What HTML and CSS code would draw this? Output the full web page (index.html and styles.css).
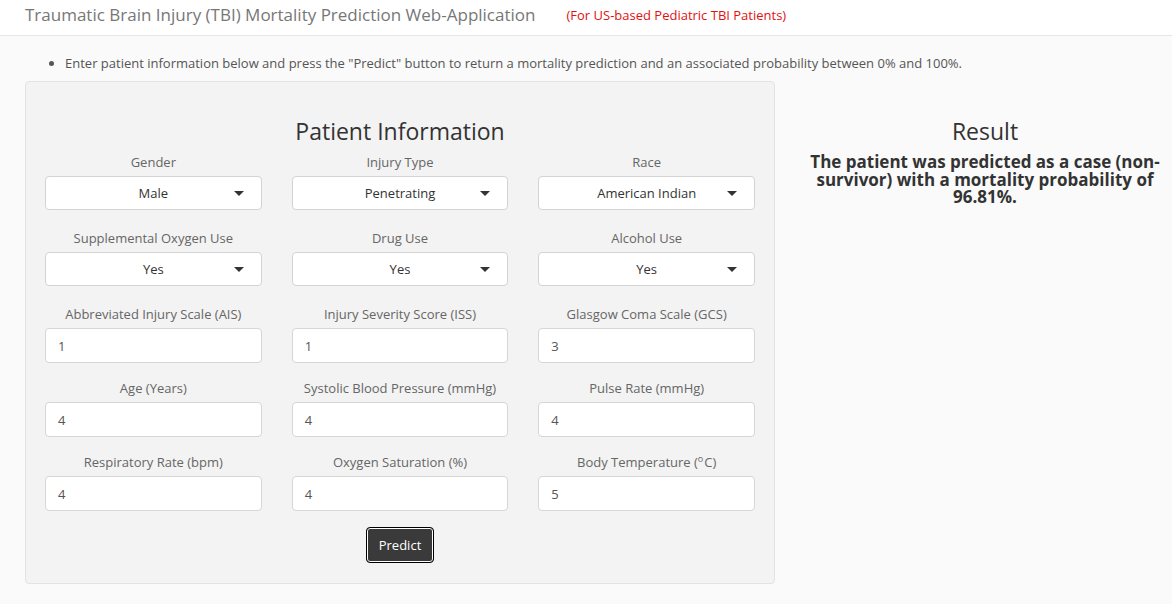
FILE: index.html
```html
<!DOCTYPE html>
<html>
<head>
<meta charset="utf-8">
<link rel="stylesheet" href="styles.css">
</head>
<body>
<header class="topbar">
  <span class="app-title">Traumatic Brain Injury (TBI) Mortality Prediction Web-Application</span>
  <span class="app-sub">(For US-based Pediatric TBI Patients)</span>
</header>
<main class="content">
  <ul class="intro">
    <li>Enter patient information below and press the "Predict" button to return a mortality prediction and an associated probability between 0% and 100%.</li>
  </ul>
  <div class="layout">
    <section class="well">
      <h3 class="panel-title">Patient Information</h3>
      <div class="grid">
        <div class="group sel"><label>Gender</label><div class="select"><span>Male</span><i class="caret"></i></div></div>
        <div class="group sel"><label>Injury Type</label><div class="select"><span>Penetrating</span><i class="caret"></i></div></div>
        <div class="group sel"><label>Race</label><div class="select"><span>American Indian</span><i class="caret"></i></div></div>

        <div class="group sel"><label>Supplemental Oxygen Use</label><div class="select"><span>Yes</span><i class="caret"></i></div></div>
        <div class="group sel"><label>Drug Use</label><div class="select"><span>Yes</span><i class="caret"></i></div></div>
        <div class="group sel"><label>Alcohol Use</label><div class="select"><span>Yes</span><i class="caret"></i></div></div>

        <div class="group"><label>Abbreviated Injury Scale (AIS)</label><div class="input">1</div></div>
        <div class="group"><label>Injury Severity Score (ISS)</label><div class="input">1</div></div>
        <div class="group"><label>Glasgow Coma Scale (GCS)</label><div class="input">3</div></div>

        <div class="group"><label>Age (Years)</label><div class="input">4</div></div>
        <div class="group"><label>Systolic Blood Pressure (mmHg)</label><div class="input">4</div></div>
        <div class="group"><label>Pulse Rate (mmHg)</label><div class="input">4</div></div>

        <div class="group"><label>Respiratory Rate (bpm)</label><div class="input">4</div></div>
        <div class="group"><label>Oxygen Saturation (%)</label><div class="input">4</div></div>
        <div class="group"><label>Body Temperature (<sup>o</sup>C)</label><div class="input">5</div></div>
      </div>
      <div class="actions"><button class="btn">Predict</button></div>
    </section>
    <section class="result">
      <h3 class="panel-title">Result</h3>
      <p class="result-text">The patient was predicted as a case (non-survivor) with a mortality probability of 96.81%.</p>
    </section>
  </div>
</main>
</body>
</html>
```
FILE: styles.css
```css
* { box-sizing: border-box; }
html, body { margin: 0; padding: 0; }
body {
  font-family: "Open Sans", "Liberation Sans", sans-serif;
  font-size: 13px;
  color: #555;
  background: #fafafa;
  overflow: hidden;
}
.topbar {
  height: 36px;
  background: #fff;
  border-bottom: 1px solid #e7e7e7;
  display: flex;
  align-items: center;
  padding-left: 25px;
  padding-bottom: 6px;
}
.app-title {
  font-size: 17px;
  color: #777;
  font-weight: 400;
}
.app-sub {
  color: #e31010;
  font-size: 13px;
  margin-left: 31px;
}
.content { padding: 0; }
.intro {
  margin: 18px 0 0 0;
  padding-left: 65px;
  line-height: 18px;
  color: #555;
}
.layout {
  display: flex;
  margin-top: 9px;
  padding-left: 25px;
}
.well {
  width: 750px;
  background: #f3f3f3;
  border: 1px solid #e3e3e3;
  border-radius: 4px;
  padding: 19px 19px 20px;
}
.panel-title {
  font-size: 23px;
  font-weight: 400;
  color: #333;
  text-align: center;
  margin: 17px 0 0;
  line-height: 26px;
  height: 26px;
}
.grid {
  margin-top: 9px;
  display: grid;
  grid-template-columns: repeat(3, 1fr);
  column-gap: 30px;
}
.group { display: flex; flex-direction: column; margin-bottom: 16px; }
.group label {
  display: block;
  text-align: center;
  color: #666;
  line-height: 18px;
  height: 18px;
  margin-bottom: 5px;
}
.group sup { font-size: 9px; vertical-align: 5px; line-height: 0; margin-right: 1px; }
.group.sel { margin-bottom: 19px; }
.select {
  height: 34px;
  background: #fff;
  border: 1px solid #d3d3d3;
  border-radius: 4px;
  display: flex;
  align-items: center;
  justify-content: center;
  position: relative;
  color: #333;
  font-size: 13px;
}
.caret {
  position: absolute;
  right: 17px;
  top: 14px;
  width: 0; height: 0;
  border-left: 5px solid transparent;
  border-right: 5px solid transparent;
  border-top: 5px solid #333;
}
.input {
  height: 35px;
  background: #fff;
  border: 1px solid #d6d6d6;
  border-radius: 4px;
  padding: 0 12px;
  display: flex;
  align-items: center;
  color: #555;
}
.group:nth-last-child(-n+3) { margin-bottom: 0; }
.actions {
  display: flex;
  justify-content: center;
  margin-top: 16px;
}
.btn {
  font-family: inherit;
  font-size: 13px;
  color: #fff;
  background: #3a3a3a;
  border: 1px solid #000;
  box-shadow: inset 0 0 0 1px #fff;
  border-radius: 4px;
  width: 68px;
  height: 36px;
  padding: 0;
}
.result {
  width: 360px;
  margin-left: 30px;
  padding-top: 20px;
}
.result-text {
  margin: 9px 0 0;
  font-size: 17px;
  font-weight: 700;
  color: #333;
  text-align: center;
  line-height: 17.5px;
}
```
